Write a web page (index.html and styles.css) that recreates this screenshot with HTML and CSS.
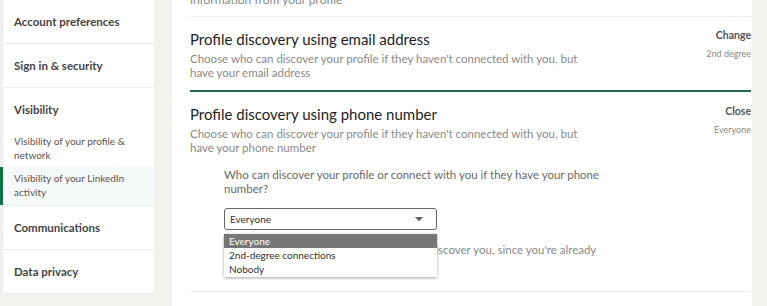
FILE: index.html
```html
<!DOCTYPE html>
<html>
<head>
<meta charset="utf-8">
<link rel="stylesheet" href="styles.css">
</head>
<body>
<div class="page">
  <nav class="sidebar">
    <div class="nav-item">Account preferences</div>
    <div class="nav-item">Sign in &amp; security</div>
    <div class="nav-group">
      <div class="nav-heading">Visibility</div>
      <div class="nav-sub">Visibility of your profile &amp; network</div>
      <div class="nav-sub active">Visibility of your LinkedIn activity</div>
    </div>
    <div class="nav-item">Communications</div>
    <div class="nav-item">Data privacy</div>
  </nav>
  <main class="card">
    <div class="prev-text">information from your profile</div>
    <section class="setting">
      <div class="setting-text">
        <h2 class="setting-title">Profile discovery using email address</h2>
        <p class="setting-desc">Choose who can discover your profile if they haven't connected with you, but have your email address</p>
      </div>
      <div class="setting-side">
        <div class="action">Change</div>
        <div class="value">2nd degree</div>
      </div>
    </section>
    <section class="setting open">
      <div class="setting-text">
        <h2 class="setting-title">Profile discovery using phone number</h2>
        <p class="setting-desc">Choose who can discover your profile if they haven't connected with you, but have your phone number</p>
        <div class="form">
          <p class="question">Who can discover your profile or connect with you if they have your phone number?</p>
          <div class="select-wrap">
            <div class="select">
              <span>Everyone</span>
              <svg class="caret" width="8" height="5" viewBox="0 0 8 5"><path d="M0 0h8L4 4.5z" fill="#666"/></svg>
            </div>
            <p class="note">Your 1st-degree connections can always discover you, since you're already</p>
            <ul class="dropdown">
              <li class="selected">Everyone</li>
              <li>2nd-degree connections</li>
              <li>Nobody</li>
            </ul>
          </div>
        </div>
      </div>
      <div class="setting-side">
        <div class="action">Close</div>
        <div class="value">Everyone</div>
      </div>
    </section>
  </main>
</div>
</body>
</html>
```

FILE: styles.css
```css
* { box-sizing: border-box; }
html, body { margin: 0; padding: 0; }
body {
  background: #f3f2ef;
  font-family: "Lato", "Open Sans", sans-serif;
  color: #333;
  width: 767px;
  height: 306px;
  overflow: hidden;
}
.page {
  display: flex;
  align-items: flex-start;
  gap: 18px;
}
.sidebar {
  width: 154px;
  background: #fff;
  border-left: 3px solid #efefef;
  flex-shrink: 0;
}
.nav-item {
  height: 44px;
  display: flex;
  align-items: center;
  padding-left: 11px;
  font-size: 11.5px;
  font-weight: 700;
  color: #444;
  border-bottom: 1px solid #ececec;
}
.nav-group {
  border-bottom: 1px solid #ececec;
  padding-top: 12px;
}
.nav-heading {
  padding-left: 11px;
  font-size: 11.5px;
  font-weight: 700;
  color: #444;
  height: 20px;
  line-height: 20px;
  margin-bottom: 11px;
}
.nav-sub {
  font-size: 10px;
  line-height: 14px;
  color: #555;
  padding: 3px 14px 5px 11px;
}
.nav-sub.active {
  margin-left: -3px;
  border-left: 3px solid #057642;
  background: #f6f9fa;
  padding: 4px 14px 6px 11px;
}
.card {
  width: 580px;
  background: #fff;
  padding: 0 1px 0 18px;
  height: 306px;
}
.prev-text {
  font-size: 12px;
  color: #888;
  height: 17px;
  line-height: 0;
  border-bottom: 1px solid #ececec;
}
.setting {
  display: flex;
  justify-content: space-between;
  border-bottom: 2px solid #1f6a4c;
  padding: 12px 0 10px 0;
}
.setting.open {
  border-bottom: 1px solid #ececec;
  padding-bottom: 0;
}
.setting-title {
  margin: 0;
  font-size: 15px;
  font-weight: 400;
  color: #1e1e1e;
  line-height: 20px;
}
.setting-desc {
  margin: 3px 0 0 0;
  font-size: 11.5px;
  line-height: 14px;
  color: #8a8a8a;
  width: 395px;
}
.setting-side {
  text-align: right;
  margin-top: -1px;
}
.setting.open .setting-side {
  margin-top: 0;
}
.action {
  font-size: 10.5px;
  font-weight: 700;
  color: #555;
  line-height: 14px;
}
.value {
  font-size: 9px;
  color: #888;
  margin-top: 6px;
  line-height: 12px;
}
.form {
  padding-left: 34px;
  padding-top: 13px;
}
.question {
  margin: 0;
  font-size: 11.5px;
  line-height: 14px;
  color: #6a6a6a;
  width: 385px;
}
.select-wrap {
  position: relative;
  margin-top: 12px;
}
.select {
  width: 213px;
  height: 22px;
  border: 1px solid #666;
  border-radius: 3px;
  display: flex;
  align-items: center;
  justify-content: space-between;
  padding: 0 13px 0 5px;
  font-size: 10px;
  color: #333;
}
.note {
  margin: 0;
  margin-top: 13px;
  font-size: 11.5px;
  line-height: 14px;
  color: #8a8a8a;
  width: 385px;
  height: 48px;
}
.dropdown {
  position: absolute;
  left: 0;
  top: 26px;
  width: 213px;
  margin: 0;
  padding: 0 0 1px 0;
  list-style: none;
  background: #fff;
  box-shadow: 0 1px 3px rgba(0,0,0,0.35);
  font-size: 10px;
  color: #333;
}
.dropdown li {
  height: 14px;
  line-height: 14px;
  padding-left: 5px;
}
.dropdown li.selected {
  background: #777;
  color: #fff;
}
```
